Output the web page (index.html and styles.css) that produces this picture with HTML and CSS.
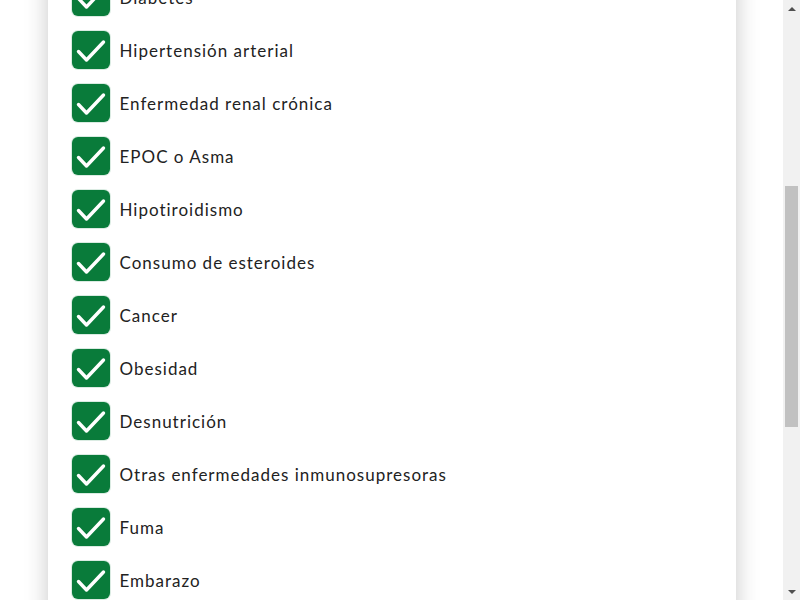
FILE: index.html
```html
<!DOCTYPE html>
<html lang="es">
<head>
<meta charset="utf-8">
<title>Antecedentes</title>
<link rel="stylesheet" href="styles.css">
</head>
<body>
<div class="window">
  <div class="stage" id="stage">
    <main class="card">
      <header class="head">
        <h1 class="title">Antecedentes médicos</h1>
        <p class="lead">Seleccione las condiciones que presenta el paciente.</p>
      </header>
      <ul class="list">
        <li class="item"><span class="box"><svg viewBox="0 0 38 38"><path d="M6.5 20.5 L14.5 29 L31.5 11"/></svg></span><span class="label">Diabetes</span></li>
        <li class="item" id="anchor"><span class="box"><svg viewBox="0 0 38 38"><path d="M6.5 20.5 L14.5 29 L31.5 11"/></svg></span><span class="label">Hipertensión arterial</span></li>
        <li class="item"><span class="box"><svg viewBox="0 0 38 38"><path d="M6.5 20.5 L14.5 29 L31.5 11"/></svg></span><span class="label">Enfermedad renal crónica</span></li>
        <li class="item"><span class="box"><svg viewBox="0 0 38 38"><path d="M6.5 20.5 L14.5 29 L31.5 11"/></svg></span><span class="label">EPOC o Asma</span></li>
        <li class="item"><span class="box"><svg viewBox="0 0 38 38"><path d="M6.5 20.5 L14.5 29 L31.5 11"/></svg></span><span class="label">Hipotiroidismo</span></li>
        <li class="item"><span class="box"><svg viewBox="0 0 38 38"><path d="M6.5 20.5 L14.5 29 L31.5 11"/></svg></span><span class="label">Consumo de esteroides</span></li>
        <li class="item"><span class="box"><svg viewBox="0 0 38 38"><path d="M6.5 20.5 L14.5 29 L31.5 11"/></svg></span><span class="label">Cancer</span></li>
        <li class="item"><span class="box"><svg viewBox="0 0 38 38"><path d="M6.5 20.5 L14.5 29 L31.5 11"/></svg></span><span class="label">Obesidad</span></li>
        <li class="item"><span class="box"><svg viewBox="0 0 38 38"><path d="M6.5 20.5 L14.5 29 L31.5 11"/></svg></span><span class="label">Desnutrición</span></li>
        <li class="item"><span class="box"><svg viewBox="0 0 38 38"><path d="M6.5 20.5 L14.5 29 L31.5 11"/></svg></span><span class="label">Otras enfermedades inmunosupresoras</span></li>
        <li class="item"><span class="box"><svg viewBox="0 0 38 38"><path d="M6.5 20.5 L14.5 29 L31.5 11"/></svg></span><span class="label">Fuma</span></li>
        <li class="item"><span class="box"><svg viewBox="0 0 38 38"><path d="M6.5 20.5 L14.5 29 L31.5 11"/></svg></span><span class="label">Embarazo</span></li>
      </ul>
      <footer class="foot">
        <button class="btn" type="button">Continuar</button>
      </footer>
    </main>
  </div>
  <div class="scrollbar" aria-hidden="true">
    <div class="sb-btn"><span class="arrow-up"></span></div>
    <div class="sb-track"><div class="sb-thumb"></div></div>
    <div class="sb-btn"><span class="arrow-down"></span></div>
  </div>
</div>
<script src="script.js"></script>
</body>
</html>
```

FILE: styles.css
```css
html, body {
  margin: 0;
  padding: 0;
  background: #ffffff;
  height: 100%;
  overflow: hidden;
}
body {
  font-family: Lato, "Liberation Sans", sans-serif;
  color: #222222;
}
.window {
  display: flex;
  width: 800px;
  height: 600px;
}
.stage {
  flex: 1;
  overflow: hidden;
  background: #ffffff;
}
.card {
  max-width: 688px;
  margin: 0 auto;
  background: #ffffff;
  box-shadow: 0 0 22px rgba(0, 0, 0, 0.22);
  padding: 120px 24px 200px;
  box-sizing: border-box;
  min-height: 1409px;
}
.head {
  height: 260px;
}
.title {
  margin: 0 0 16px;
  font-size: 28px;
  font-weight: 400;
  letter-spacing: 1px;
}
.lead {
  margin: 0;
  font-size: 17px;
  letter-spacing: 0.8px;
}
.list {
  list-style: none;
  margin: 0;
  padding: 0;
  display: flex;
  flex-direction: column;
  gap: 15px;
}
.item {
  display: flex;
  align-items: center;
  gap: 10px;
  height: 38px;
}
.box {
  width: 38px;
  height: 38px;
  border-radius: 6px;
  background: #097b3a;
  box-shadow: 0 0 0 1px rgba(9, 123, 58, 0.15);
  flex: none;
  display: flex;
}
.box svg {
  width: 38px;
  height: 38px;
}
.box path {
  fill: none;
  stroke: #ffffff;
  stroke-width: 3.4;
  stroke-linecap: round;
  stroke-linejoin: round;
}
.label {
  font-size: 17px;
  letter-spacing: 1px;
  line-height: 20px;
  padding-top: 1px;
}
.foot {
  padding-top: 60px;
}
.btn {
  font-family: inherit;
  font-size: 17px;
  color: #ffffff;
  background: #097b3a;
  border: 0;
  border-radius: 6px;
  padding: 12px 32px;
}

/* classic scrollbar */
.scrollbar {
  width: 17px;
  flex: none;
  display: flex;
  flex-direction: column;
  background: #f1f1f1;
}
.sb-btn {
  height: 17px;
  flex: none;
  display: flex;
  align-items: center;
  justify-content: center;
}
.arrow-up {
  width: 0;
  height: 0;
  border-left: 4px solid transparent;
  border-right: 4px solid transparent;
  border-bottom: 4px solid #505050;
}
.arrow-down {
  width: 0;
  height: 0;
  border-left: 4px solid transparent;
  border-right: 4px solid transparent;
  border-top: 4px solid #505050;
}
.sb-track {
  flex: 1;
  display: flex;
  flex-direction: column;
  align-items: center;
}
.sb-thumb {
  width: 13px;
  height: 241px;
  margin-top: 169px;
  background: #c1c1c1;
}
```

FILE: script.js
```js
(function () {
  var stage = document.getElementById('stage');
  var el = document.getElementById('anchor');
  var offset = el.getBoundingClientRect().top - stage.getBoundingClientRect().top;
  stage.scrollTop = offset - 31;
})();
```
